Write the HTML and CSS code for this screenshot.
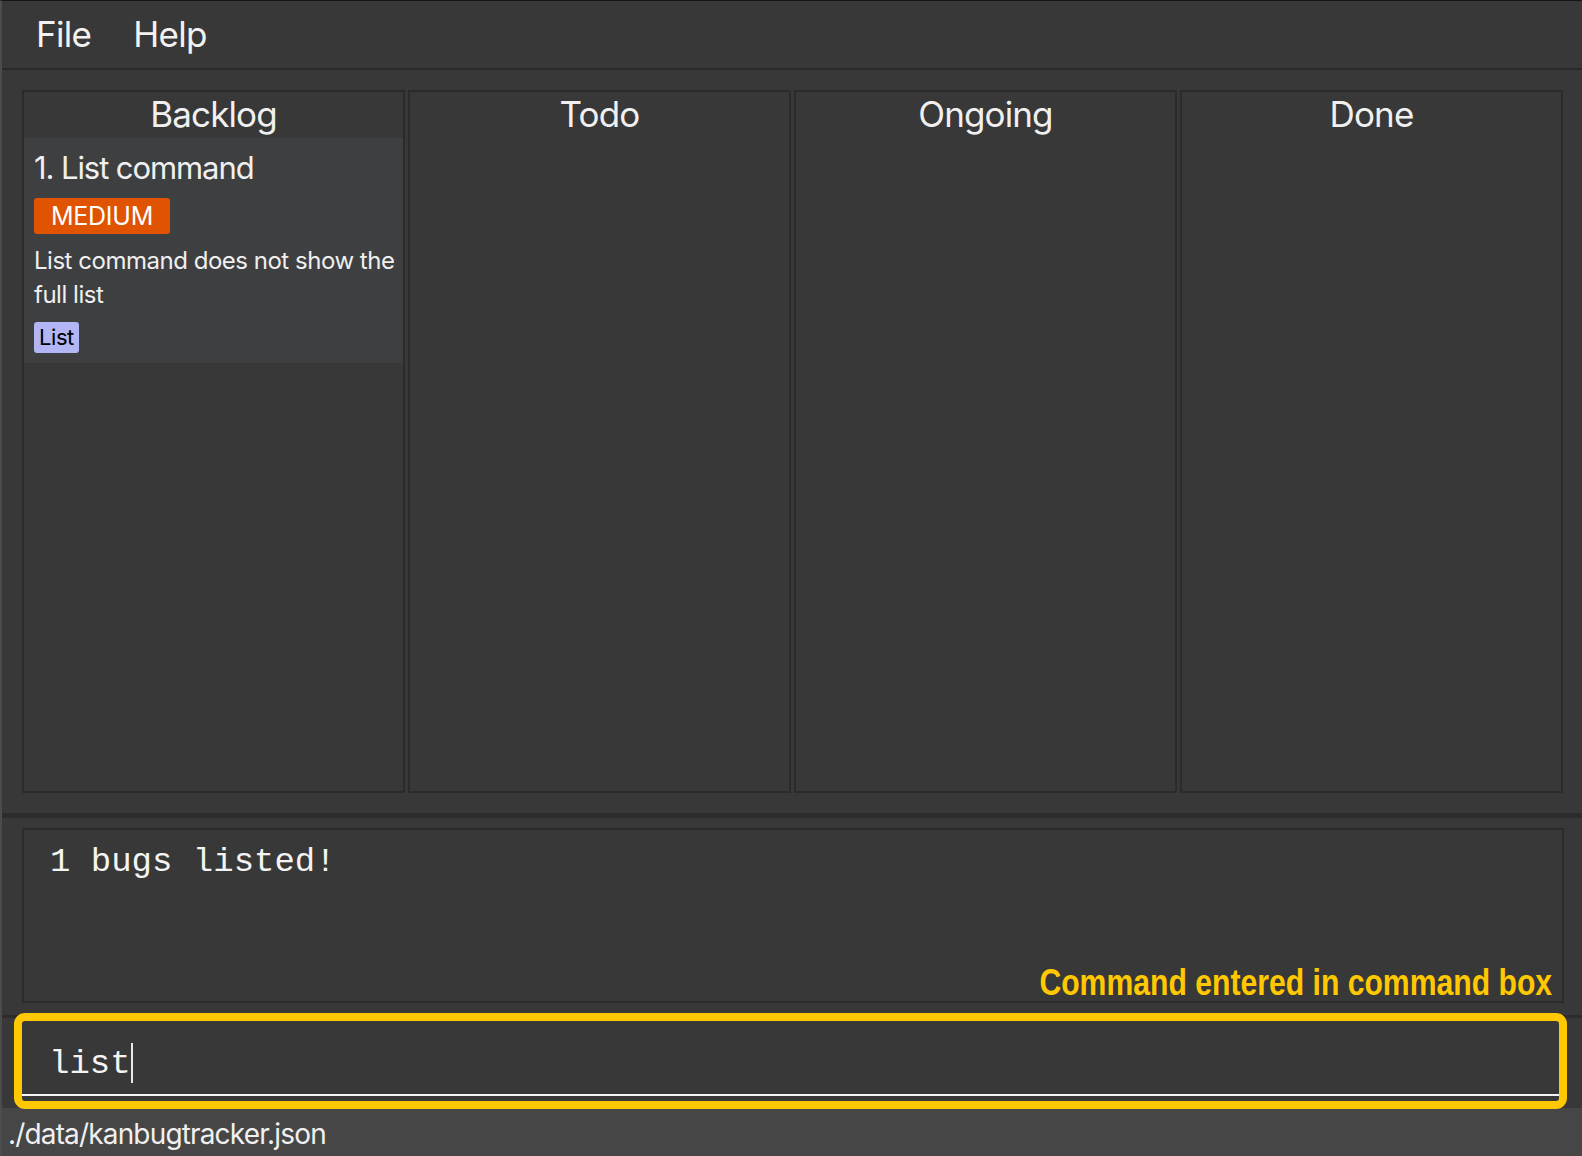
FILE: index.html
```html
<!DOCTYPE html>
<html lang="en">
<head>
<meta charset="utf-8">
<title>KanBugTracker</title>
<link rel="stylesheet" href="styles.css">
</head>
<body>
<div class="window">
  <nav class="menubar">
    <span class="menu-item">File</span>
    <span class="menu-item">Help</span>
  </nav>

  <main class="board">
    <section class="column">
      <h2 class="column-title">Backlog</h2>
      <div class="card">
        <div class="card-title">1. List command</div>
        <span class="priority">MEDIUM</span>
        <p class="card-desc">List command does not show the full list</p>
        <span class="tag">List</span>
      </div>
    </section>
    <section class="column">
      <h2 class="column-title">Todo</h2>
    </section>
    <section class="column">
      <h2 class="column-title">Ongoing</h2>
    </section>
    <section class="column">
      <h2 class="column-title">Done</h2>
    </section>
  </main>

  <div class="result-area">
    <div class="result-box">
      <div class="result-text">1 bugs listed!</div>
      <div class="annotation">Command entered in command box</div>
    </div>
  </div>

  <div class="command-area">
    <div class="command-field"><span class="command-text">list</span><span class="caret"></span></div>
    <div class="highlight"></div>
  </div>

  <footer class="statusbar">./data/kanbugtracker.json</footer>
</div>
</body>
</html>
```

FILE: styles.css
```css
* {
  box-sizing: border-box;
}

html, body {
  margin: 0;
  padding: 0;
  background: #383838;
}

body {
  font-family: Inter, "Noto Sans", sans-serif;
  color: #f1f1f1;
  overflow: hidden;
}

.window {
  width: 1582px;
  height: 1156px;
  display: flex;
  flex-direction: column;
  background: #383838;
  border-top: 1px solid #151515;
  border-left: 2px solid #4c4c4c;
}

/* Menu bar */
.menubar {
  height: 69px;
  flex: none;
  display: flex;
  align-items: center;
  gap: 42px;
  padding-left: 34px;
  border-bottom: 2px solid #2a2a2a;
}

.menu-item {
  font-size: 35px;
  line-height: 67px;
  letter-spacing: -0.02em;
  color: #f2f2f2;
}

/* Board */
.board {
  flex: none;
  height: 743px;
  padding: 20px 19px 20px 20px;
  display: grid;
  grid-template-columns: repeat(4, 1fr);
  column-gap: 3px;
}

.column {
  border: 2px solid #2b2b2b;
  background: #383838;
  display: flex;
  flex-direction: column;
  min-width: 0;
}

.column-title {
  margin: 0;
  font-size: 35px;
  font-weight: 400;
  line-height: 45px;
  height: 46px;
  text-align: center;
  letter-spacing: -0.025em;
  color: #f0f0f0;
}

.card {
  background: #3e3f41;
  padding: 11px 4px 10px 10px;
  display: flex;
  flex-direction: column;
  align-items: flex-start;
}

.card-title {
  font-size: 31px;
  line-height: 38px;
  letter-spacing: -0.035em;
  color: #f0f0f0;
}

.priority {
  margin-top: 11px;
  height: 36px;
  width: 136px;
  background: #e05300;
  border-radius: 3px;
  font-size: 25px;
  line-height: 36px;
  text-align: center;
  letter-spacing: -0.01em;
  color: #ffffff;
}

.card-desc {
  margin: 10px 0 0 0;
  font-size: 24px;
  line-height: 34px;
  letter-spacing: -0.02em;
  color: #efefef;
}

.tag {
  margin-top: 10px;
  height: 31px;
  padding: 0 5px;
  background: #b2b6f4;
  border-radius: 3px;
  font-size: 22px;
  line-height: 31px;
  letter-spacing: -0.02em;
  color: #000000;
}

/* Result display */
.result-area {
  flex: none;
  height: 202px;
  border-top: 5px solid #2c2c2c;
  padding: 10px 18px 0 20px;
}

.result-box {
  position: relative;
  height: 175px;
  border: 2px solid #2b2b2b;
  padding: 13px 26px 0 26px;
}

.result-text {
  font-family: "Liberation Mono", "DejaVu Sans Mono", monospace;
  font-size: 34px;
  line-height: 39px;
  color: #f4f4f4;
  white-space: pre;
}

.annotation {
  position: absolute;
  right: 10px;
  bottom: 0;
  font-family: "Liberation Sans", Arial, sans-serif;
  font-weight: 700;
  font-size: 37px;
  line-height: 37px;
  color: #ffc800;
  white-space: nowrap;
  transform: scaleX(0.815);
  transform-origin: right bottom;
}

/* Command box */
.command-area {
  position: relative;
  flex: none;
  height: 93px;
  border-top: 3px solid #2c2c2c;
  padding: 0 21px 12px 20px;
}

.command-field {
  height: 78px;
  border-bottom: 2px solid #f4f4f4;
  padding: 27px 0 0 27px;
  display: flex;
  align-items: flex-start;
}

.command-text {
  font-family: "Liberation Mono", "DejaVu Sans Mono", monospace;
  font-size: 34px;
  line-height: 39px;
  color: #f4f4f4;
  white-space: pre;
}

.caret {
  width: 2px;
  height: 40px;
  margin-top: -2px;
  background: #e8e8e8;
}

.highlight {
  position: absolute;
  left: 12px;
  right: 15px;
  top: -5px;
  bottom: -1px;
  border: 8px solid #ffc800;
  border-radius: 11px;
  pointer-events: none;
}

/* Status bar */
.statusbar {
  flex: 1;
  background: #464646;
  padding-left: 6px;
  padding-top: 3px;
  font-size: 28px;
  line-height: 46px;
  letter-spacing: -0.03em;
  color: #f0f0f0;
}
```
